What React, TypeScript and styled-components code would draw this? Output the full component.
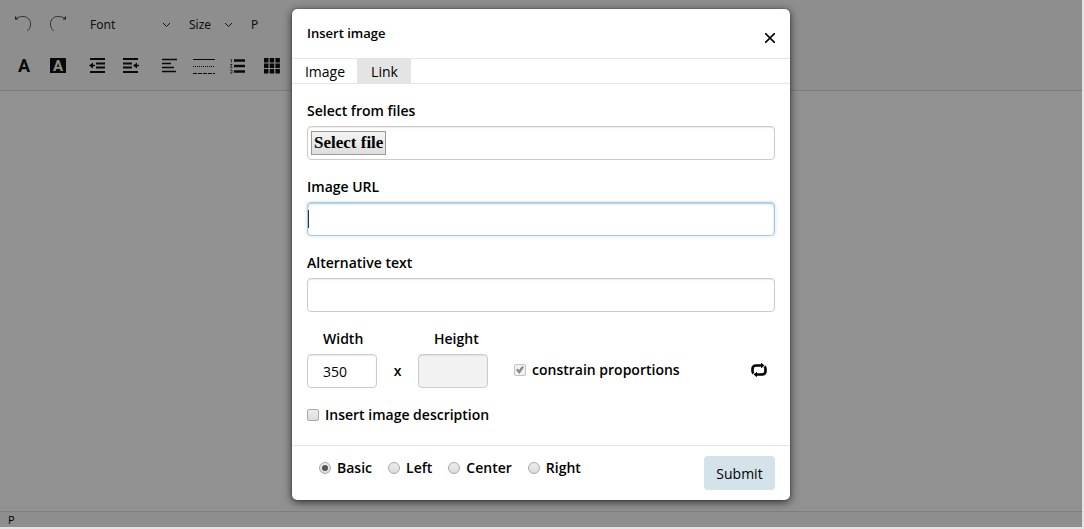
import React, { useRef, useState } from "react";
import styled, { createGlobalStyle } from "styled-components";

const Global = createGlobalStyle`
  * { box-sizing: border-box; }
  body { margin: 0; background: #e4e4e4; }
  body, button, input, select { font-family: "Open Sans", "Noto Sans", sans-serif; color: #000; }
`;

const Editor = styled.main`
  position: relative;
  display: flex;
  flex-direction: column;
  min-height: calc(100vh - 2px);
  margin: 0 2px 2px 0;
  background: #fff;
`;
const Toolbar = styled.div`
  padding: 8px 12px 1px;
  background: #fafafa;
  border-bottom: 1px solid #dedede;
`;
const ToolRow = styled.div<{ $height: number }>`
  display: flex;
  align-items: center;
  height: ${(p) => p.$height}px;
`;
const Tool = styled.button<{ $space?: number }>`
  display: flex;
  align-items: center;
  justify-content: center;
  width: 24px;
  height: 24px;
  margin-right: ${(p) => p.$space ?? 10}px;
  padding: 0;
  border: 0;
  background: none;
  svg { flex: none; }
`;
const Picker = styled.label<{ $width: number; $after: number }>`
  display: flex;
  align-items: center;
  width: ${(p) => p.$width}px;
  margin-right: ${(p) => p.$after}px;
  select {
    flex: 1;
    min-width: 0;
    padding: 0;
    border: 0;
    appearance: none;
    background: none;
    font-family: "Noto Sans", sans-serif;
    font-size: 12px;
    line-height: 20px;
    color: #222;
  }
`;
const Canvas = styled.div`flex: 1;`;
const StatusBar = styled.footer`
  height: 16px;
  padding-left: 8px;
  border-top: 1px solid #dedede;
  background: #fafafa;
  font-size: 11px;
  line-height: 16px;
`;
const Backdrop = styled.div`
  position: absolute;
  inset: 0;
  padding: 9px 0;
  background: rgba(0, 0, 0, 0.43);
`;
const Modal = styled.section`
  width: 100%;
  max-width: 498px;
  margin: 0 auto;
  border-radius: 5px;
  background: #fff;
  box-shadow: 0 2px 8px rgba(0, 0, 0, 0.7), 0 0 1px #000;
`;
const Header = styled.header`
  display: flex;
  justify-content: space-between;
  height: 50px;
  padding: 14px 15px 0;
  border-bottom: 1px solid #e4e4e4;
`;
const Title = styled.h1`
  margin: 0;
  font-size: 13px;
  font-weight: 600;
  line-height: 20px;
`;
const Close = styled.button`
  align-self: flex-start;
  display: flex;
  margin-top: 10px;
  padding: 0;
  border: 0;
  background: none;
`;
const Tabs = styled.div`
  display: flex;
  height: 25px;
  border-bottom: 1px solid #e4e4e4;
`;
const Tab = styled.button<{ $active: boolean }>`
  width: ${(p) => (p.$active ? 65 : 54)}px;
  padding: 2px 0 0 1px;
  border: 0;
  background: ${(p) => (p.$active ? "#fff" : "#e4e4e4")};
  font-size: 14px;
  line-height: 22px;
`;
const Body = styled.div`
  display: flex;
  flex-direction: column;
  gap: 17px;
  padding: 17px 15px 20px;
`;
const Field = styled.div<{ $width?: number }>`
  display: flex;
  flex-direction: column;
  gap: 5px;
  width: ${(p) => (p.$width ? p.$width + "px" : "auto")};
`;
const Label = styled.label<{ $indent?: number }>`
  padding-left: ${(p) => p.$indent ?? 0}px;
  font-size: 14px;
  font-weight: 600;
  line-height: 20px;
`;
const TextInput = styled.input<{ $inset?: number }>`
  width: 100%;
  height: 34px;
  padding: 0 ${(p) => p.$inset ?? 4}px;
  border: 1px solid #ccc;
  border-radius: 4px;
  background: #fff;
  box-shadow: inset 0 1px 1px rgba(0, 0, 0, 0.08);
  font-size: 14px;
  outline: none;
  &:disabled { background: #f2f2f2; }
`;
const UrlInput = styled(TextInput)`
  border-color: #a9c9d8;
  box-shadow: inset 0 1px 2px #a9c9d8, 0 0 4px #cfe1ea;
  &:placeholder-shown {
    caret-color: transparent;
    background: linear-gradient(#000, #000) 0 7px / 1px 18px no-repeat #fff;
  }
`;
const FileBox = styled.div`
  height: 34px;
  padding: 4px 3px;
  border: 1px solid #ccc;
  border-radius: 4px;
  box-shadow: inset 0 1px 1px rgba(0, 0, 0, 0.08);
`;
const FileButton = styled.button`
  display: block;
  height: 24px;
  padding: 0 2px;
  border: 1px solid #999;
  background: linear-gradient(#f4f4f4, #dedede);
  font-family: "Liberation Serif", serif;
  font-size: 17px;
  font-weight: 700;
  line-height: 20px;
`;
const SizeRow = styled.div`
  display: flex;
  align-items: flex-end;
`;
const Times = styled.span`
  width: 41px;
  font-size: 14px;
  font-weight: 600;
  line-height: 34px;
  text-align: center;
`;
const Constrain = styled.div`
  display: flex;
  flex: 1;
  align-items: center;
  justify-content: space-between;
  height: 34px;
  padding: 0 8px 2px 26px;
`;
const Choice = styled.label`
  display: flex;
  align-items: center;
  gap: 6px;
  font-size: 14px;
  font-weight: 600;
  line-height: 20px;
`;
const Tick = styled.input`
  appearance: none;
  display: grid;
  place-content: center;
  width: 12px;
  height: 12px;
  margin: 0;
  border: 1px solid #aaa;
  border-radius: 2px;
  background: linear-gradient(#ededed, #dcdcdc);
  &:disabled { border-color: #c4c4c4; background: #f2f2f2; }
  &:checked::before {
    content: "";
    width: 8px;
    height: 8px;
    background: #8a8a8a;
    clip-path: polygon(0 50%, 20% 30%, 38% 50%, 76% 0, 100% 16%, 42% 100%);
  }
`;
const Radio = styled(Tick)`
  border-radius: 50%;
  &:checked::before {
    width: 6px;
    height: 6px;
    border-radius: 50%;
    background: #555;
    clip-path: none;
  }
`;
const Reset = styled.button`
  display: flex;
  padding: 0;
  border: 0;
  background: none;
`;
const Footer = styled.footer`
  display: flex;
  justify-content: space-between;
  padding: 10px 15px;
  border-top: 1px solid #e4e4e4;
`;
const Alignments = styled.fieldset`
  display: flex;
  align-items: center;
  gap: 16px;
  height: 24px;
  margin: 0;
  padding: 0 0 0 12px;
  border: 0;
`;
const Submit = styled.button`
  width: 71px;
  height: 34px;
  padding: 0;
  border: 0;
  border-radius: 4px;
  background: #d4e2ea;
  font-size: 14px;
`;

const Chevron = () => (
  <svg width="9" height="6" viewBox="0 0 9 6" fill="none" stroke="#222" aria-hidden="true">
    <path d="M1 1l3.500 3.500L8 1" />
  </svg>
);

const Undo = () => (
  <svg width="18" height="18" viewBox="0 0 18 18" fill="none" stroke="#333" strokeWidth=".8">
    <path d="M1 2.500C3.500 1 5.500.5 8 .5c5 0 7.600 3.700 7.600 7.500 0 3-1.200 5.200-3.300 7" />
    <path d="M.6.5v2.500H3" strokeWidth="1.200" />
  </svg>
);
const Redo = () => (
  <svg width="18" height="18" viewBox="0 0 18 18" fill="none" stroke="#333" strokeWidth=".8">
    <path d="M16 2.500C13.500 1 11.500.5 9 .5 4 .5 1.400 4.200 1.400 8c0 3 1.200 5.200 3.300 7" />
    <path d="M16.400.5v2.500H14" strokeWidth="1.200" />
  </svg>
);
const Letter = styled.span<{ $boxed?: boolean }>`
  width: 16px;
  height: 15px;
  background: ${(p) => (p.$boxed ? "#111" : "none")};
  color: ${(p) => (p.$boxed ? "#fafafa" : "#111")};
  font-family: Roboto, sans-serif;
  font-size: ${(p) => (p.$boxed ? 15 : 18)}px;
  font-weight: 700;
  line-height: 16px;
  text-align: center;
`;
const Outdent = () => (
  <svg width="16" height="16" viewBox="0 0 16 16" stroke="#111" strokeWidth="2">
    <path d="M1 1h15M7 5.500h9M7 9.500h9M1 14h15" />
    <path d="M0 7.500L4 4.500v6z" fill="#111" stroke="none" />
    <path d="M3 7.500h3" strokeWidth="1.500" />
  </svg>
);
const Indent = () => (
  <svg width="16" height="16" viewBox="0 0 16 16" stroke="#111" strokeWidth="2">
    <path d="M0 1h15M0 5.500h9M0 9.500h9M0 14h15" />
    <path d="M10 7.500l4-3v6z" fill="#111" stroke="none" />
    <path d="M13 7.500h3" strokeWidth="1.500" />
  </svg>
);
const AlignLeft = () => (
  <svg width="16" height="16" viewBox="0 0 16 16" stroke="#111" strokeWidth="1.600">
    <path d="M0 1.500h15M0 5.500h9M0 9.500h12M0 13.500h14" />
  </svg>
);
const Rule = () => (
  <svg width="22" height="16" viewBox="0 0 22 16" stroke="#111">
    <path d="M0 1.500h22" />
    <path d="M0 8.500h22" strokeDasharray="1 1" />
    <path d="M0 15.500h22" strokeDasharray="4 1" />
  </svg>
);
const NumberList = () => (
  <svg width="16" height="16" viewBox="0 0 16 16" stroke="#111" strokeWidth="2.400">
    <path d="M4 2.500h11M4 8h11M4 13.500h11" />
    <path d="M.5 1.500h1v3M0 6.500h2L.5 9.500h2M0 12h2v3H0" fill="none" strokeWidth=".7" />
  </svg>
);
const Grid = () => (
  <svg width="16" height="16" viewBox="0 0 16 16" fill="#111">
    <path d="M0 0h4.500v4.500H0zM5.700 0h4.500v4.500H5.700zM11.400 0h4.500v4.500h-4.500zM0 5.500h4.500V10H0zM5.700 5.500h4.500V10H5.700zM11.400 5.500h4.500V10h-4.500zM0 11h4.500v4.500H0zM5.700 11h4.500v4.500H5.700zM11.400 11h4.500v4.500h-4.500z" />
  </svg>
);
const Cycle = () => (
  <svg width="16" height="16" viewBox="0 0 16 16" aria-hidden="true">
    <g fill="none" stroke="#000" strokeWidth="2.600">
      <path d="M2.500 11.500Q1.500 10.500 1.500 9V7Q1.500 3.500 5 3.500h6" />
      <path d="M13.500 4.500q1 1 1 2.500v2q0 3.500-3.500 3.500H5" />
    </g>
    <path d="M10 .8L13.500 3.500 10 6.200zM6 9.800L2.500 12.500 6 15.200z" />
  </svg>
);

const ALIGNMENTS = ["Basic", "Left", "Center", "Right"];

export default function App() {
  const file = useRef<HTMLInputElement>(null);
  const [tab, setTab] = useState("Image");
  const [align, setAlign] = useState("Basic");
  return (
    <>
      <Global />
      <Editor>
        <Toolbar>
          <ToolRow $height={34}>
            <Tool aria-label="Undo"><Undo /></Tool>
            <Tool aria-label="Redo" $space={20}><Redo /></Tool>
            <Picker $width={81} $after={18}>
              <select aria-label="Font"><option>Font</option></select>
              <Chevron />
            </Picker>
            <Picker $width={44} $after={18}>
              <select aria-label="Size"><option>Size</option></select>
              <Chevron />
            </Picker>
            <Picker $width={60} $after={0}>
              <select aria-label="Paragraph style"><option>P</option></select>
              <Chevron />
            </Picker>
          </ToolRow>
          <ToolRow $height={47}>
            <Tool aria-label="Text color"><Letter>A</Letter></Tool>
            <Tool aria-label="Background color" $space={15}><Letter $boxed>A</Letter></Tool>
            <Tool aria-label="Outdent"><Outdent /></Tool>
            <Tool aria-label="Indent" $space={15}><Indent /></Tool>
            <Tool aria-label="Align"><AlignLeft /></Tool>
            <Tool aria-label="Line"><Rule /></Tool>
            <Tool aria-label="List"><NumberList /></Tool>
            <Tool aria-label="Table"><Grid /></Tool>
          </ToolRow>
        </Toolbar>
        <Canvas />
        <StatusBar>P</StatusBar>
        <Backdrop>
          <Modal role="dialog" aria-labelledby="title">
            <Header>
              <Title id="title">Insert image</Title>
              <Close aria-label="Close">
                <svg width="10" height="10" viewBox="0 0 10 10" stroke="#000" strokeWidth="1.600">
                  <path d="M0 0l10 10M10 0L0 10" />
                </svg>
              </Close>
            </Header>
            <Tabs role="tablist">
              {["Image", "Link"].map((name) => (
                <Tab key={name} role="tab" aria-selected={tab === name} $active={tab === name} onClick={() => setTab(name)}>
                  {name}
                </Tab>
              ))}
            </Tabs>
            <Body>
              <Field>
                <Label htmlFor="file">Select from files</Label>
                <FileBox>
                  <FileButton type="button" onClick={() => file.current?.click()}>Select file</FileButton>
                  <input id="file" ref={file} type="file" accept="image/*" hidden />
                </FileBox>
              </Field>
              <Field>
                <Label htmlFor="url">Image URL</Label>
                <UrlInput id="url" placeholder=" " autoFocus />
              </Field>
              <Field>
                <Label htmlFor="alt">Alternative text</Label>
                <TextInput id="alt" />
              </Field>
              <SizeRow>
                <Field $width={70}>
                  <Label htmlFor="width" $indent={16}>Width</Label>
                  <TextInput id="width" defaultValue="350" $inset={15} />
                </Field>
                <Times>x</Times>
                <Field $width={70}>
                  <Label htmlFor="height" $indent={16}>Height</Label>
                  <TextInput id="height" disabled $inset={15} />
                </Field>
                <Constrain>
                  <Choice><Tick type="checkbox" defaultChecked disabled />constrain proportions</Choice>
                  <Reset aria-label="Reset size"><Cycle /></Reset>
                </Constrain>
              </SizeRow>
              <Choice><Tick type="checkbox" />Insert image description</Choice>
            </Body>
            <Footer>
              <Alignments aria-label="Alignment">
                {ALIGNMENTS.map((name) => (
                  <Choice key={name}>
                    <Radio type="radio" name="align" checked={align === name} onChange={() => setAlign(name)} />
                    {name}
                  </Choice>
                ))}
              </Alignments>
              <Submit>Submit</Submit>
            </Footer>
          </Modal>
        </Backdrop>
      </Editor>
    </>
  );
}
